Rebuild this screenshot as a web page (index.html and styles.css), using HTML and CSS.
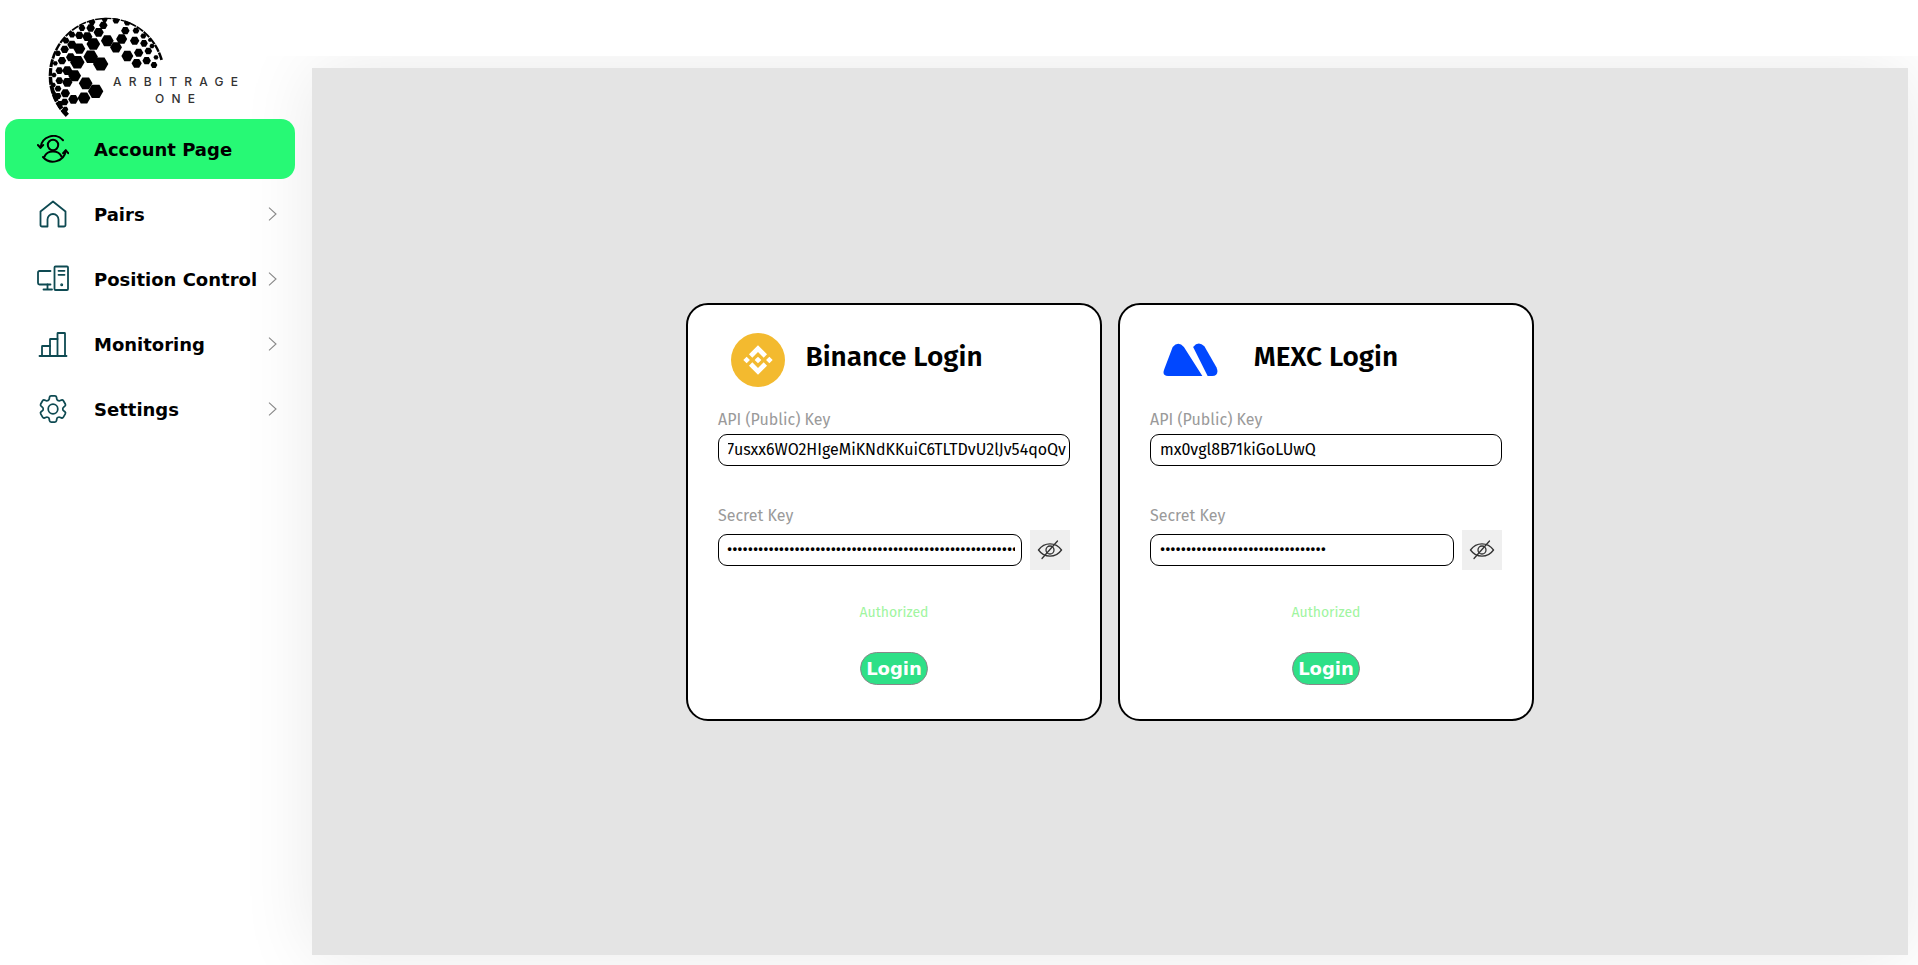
FILE: index.html
```html
<!DOCTYPE html>
<html lang="en">
<head>
<meta charset="utf-8">
<title>Arbitrage One</title>
<link rel="stylesheet" href="styles.css">
</head>
<body>
<aside class="sidebar">
  <div class="brand">
    <svg class="brand-mark" width="210" height="110" viewBox="0 0 210 110" role="img" aria-label="Arbitrage One">
      <defs>
        <polygon id="hex" points="-1.28,0 -0.64,-1.1 0.64,-1.1 1.28,0 0.64,1.1 -0.64,1.1"/>
        <clipPath id="dome"><circle cx="201" cy="198" r="175"/></clipPath>
      </defs>
      <g transform="scale(0.3333)" clip-path="url(#dome)">
        <path d="M82 316A172 172 0 1 1 368 150" fill="none" stroke="#000" stroke-width="14" stroke-dasharray="24 2.500"/>
        <use href="#hex" transform="translate(182 162) scale(18)"/>
        <use href="#hex" transform="translate(152 140) scale(17)"/>
        <use href="#hex" transform="translate(112 157) scale(17)"/>
        <use href="#hex" transform="translate(167 244) scale(18)"/>
        <use href="#hex" transform="translate(137 220) scale(16)"/>
        <use href="#hex" transform="translate(132 264) scale(15)"/>
        <use href="#hex" transform="translate(104 197) scale(15)"/>
        <use href="#hex" transform="translate(100 268) scale(12)"/>
        <use href="#hex" transform="translate(82 182) scale(12)"/>
        <use href="#hex" transform="translate(82 217) scale(12)"/>
        <use href="#hex" transform="translate(76 250) scale(11)"/>
        <use href="#hex" transform="translate(74 276) scale(9)"/>
        <use href="#hex" transform="translate(160 102) scale(16)"/>
        <use href="#hex" transform="translate(118 116) scale(14)"/>
        <use href="#hex" transform="translate(202 92) scale(15)"/>
        <use href="#hex" transform="translate(142 80) scale(12)"/>
        <use href="#hex" transform="translate(92 142) scale(11)"/>
        <use href="#hex" transform="translate(96 104) scale(11)"/>
        <use href="#hex" transform="translate(176 67) scale(12)"/>
        <use href="#hex" transform="translate(190 46) scale(10)"/>
        <use href="#hex" transform="translate(152 54) scale(10)"/>
        <use href="#hex" transform="translate(118 76) scale(10)"/>
        <use href="#hex" transform="translate(74 118) scale(10)"/>
        <use href="#hex" transform="translate(66 152) scale(10)"/>
        <use href="#hex" transform="translate(58 182) scale(9)"/>
        <use href="#hex" transform="translate(58 212) scale(9)"/>
        <use href="#hex" transform="translate(54 236) scale(8)"/>
        <use href="#hex" transform="translate(54 258) scale(8)"/>
        <use href="#hex" transform="translate(60 282) scale(8)"/>
        <use href="#hex" transform="translate(76 298) scale(7)"/>
        <use href="#hex" transform="translate(46 160) scale(6)"/>
        <use href="#hex" transform="translate(54 130) scale(7)"/>
        <use href="#hex" transform="translate(42 195) scale(6)"/>
        <use href="#hex" transform="translate(40 225) scale(6)"/>
        <use href="#hex" transform="translate(42 250) scale(5)"/>
        <use href="#hex" transform="translate(78 92) scale(8)"/>
        <use href="#hex" transform="translate(96 74) scale(8)"/>
        <use href="#hex" transform="translate(126 54) scale(8)"/>
        <use href="#hex" transform="translate(156 36) scale(8)"/>
        <use href="#hex" transform="translate(194 28) scale(7)"/>
        <use href="#hex" transform="translate(228 32) scale(8)"/>
        <use href="#hex" transform="translate(262 38) scale(8)"/>
        <use href="#hex" transform="translate(245 87) scale(13)"/>
        <use href="#hex" transform="translate(262 138) scale(14)"/>
        <use href="#hex" transform="translate(228 112) scale(14)"/>
        <use href="#hex" transform="translate(290 160) scale(12)"/>
        <use href="#hex" transform="translate(320 152) scale(10)"/>
        <use href="#hex" transform="translate(342 165) scale(8)"/>
        <use href="#hex" transform="translate(296 128) scale(11)"/>
        <use href="#hex" transform="translate(325 123) scale(9)"/>
        <use href="#hex" transform="translate(348 142) scale(6)"/>
        <use href="#hex" transform="translate(284 92) scale(11)"/>
        <use href="#hex" transform="translate(256 62) scale(10)"/>
        <use href="#hex" transform="translate(312 100) scale(9)"/>
        <use href="#hex" transform="translate(336 108) scale(6)"/>
        <use href="#hex" transform="translate(288 62) scale(8)"/>
        <use href="#hex" transform="translate(310 78) scale(7)"/>
        <use href="#hex" transform="translate(330 90) scale(5)"/>
      </g>
      <text class="brand-line" x="73" y="76">ARBITRAGE</text>
      <text class="brand-line" x="115" y="93">ONE</text>
    </svg>
  </div>
  <nav class="nav">
    <a class="nav-item nav-item-active">
      <svg class="nav-icon" width="32" height="28" viewBox="0 0 32 28" fill="none" stroke="#000" stroke-width="2" stroke-linecap="round" stroke-linejoin="round">
        <circle cx="16" cy="10" r="5.200"/>
        <path d="M7.500 21.500c1.500-3.500 4.500-5 8.500-5s7 1.500 8.500 5"/>
        <path d="M3.500 12.500A13 13 0 0 1 26 5.200"/>
        <path d="M28.800 15.500A13 13 0 0 1 6 22"/>
        <path d="M.9 10l2.600 2.800L6.200 10"/>
        <path d="M31.200 18.200l-2.400-2.900-2.700 2.900"/>
      </svg>
      <span class="nav-label">Account Page</span>
    </a>
    <a class="nav-item">
      <svg class="nav-icon" width="32" height="28" viewBox="0 0 32 28" fill="none" stroke="#0e4a52" stroke-width="1.800" stroke-linecap="round" stroke-linejoin="round">
        <path d="M3.500 11.500L16 1.500l12.500 10V25a1.500 1.500 0 0 1-1.500 1.500h-5.500V19.500a5.500 5.500 0 0 0-11 0v7H5a1.500 1.500 0 0 1-1.500-1.500z"/>
      </svg>
      <span class="nav-label">Pairs</span>
      <svg class="nav-chevron" width="9" height="14" viewBox="0 0 9 14" fill="none" stroke="#888" stroke-width="1.100"><path d="M1 .7L8 7l-7 6.300"/></svg>
    </a>
    <a class="nav-item">
      <svg class="nav-icon" width="32" height="28" viewBox="0 0 32 28" fill="none" stroke="#0e4a52" stroke-width="1.800" stroke-linecap="round" stroke-linejoin="round">
        <path d="M13.500 6H2.500a1.500 1.500 0 0 0-1.500 1.500V18a1.500 1.500 0 0 0 1.500 1.500h11"/>
        <path d="M10.500 19.500v4.500M6.500 24.500h8.500"/>
        <rect x="17.500" y="1.500" width="13.500" height="23.500" rx="1"/>
        <path d="M21.500 5.800h6M21.500 9.800h6"/>
        <circle cx="24.700" cy="19.800" r=".6" fill="#0e4a52"/>
      </svg>
      <span class="nav-label">Position Control</span>
      <svg class="nav-chevron" width="9" height="14" viewBox="0 0 9 14" fill="none" stroke="#888" stroke-width="1.100"><path d="M1 .7L8 7l-7 6.300"/></svg>
    </a>
    <a class="nav-item">
      <svg class="nav-icon" width="32" height="28" viewBox="0 0 32 28" fill="none" stroke="#0e4a52" stroke-width="1.800" stroke-linecap="round" stroke-linejoin="round">
        <path d="M2.500 26h27"/>
        <path d="M5 26V16.500a.5.5 0 0 1 .5-.5H13"/>
        <path d="M13 26V9.500a.5.5 0 0 1 .5-.5H20.500"/>
        <path d="M20.500 26V3.500a.5.5 0 0 1 .5-.5h6.500a.5.5 0 0 1 .5.5V26"/>
      </svg>
      <span class="nav-label">Monitoring</span>
      <svg class="nav-chevron" width="9" height="14" viewBox="0 0 9 14" fill="none" stroke="#888" stroke-width="1.100"><path d="M1 .7L8 7l-7 6.300"/></svg>
    </a>
    <a class="nav-item">
      <svg class="nav-icon" width="32" height="28" viewBox="1 2.400 22 19.250" fill="none" stroke="#0e4a52" stroke-width="1.200" stroke-linecap="round" stroke-linejoin="round">
        <path d="M9.594 3.940c.09-.542.56-.94 1.110-.94h2.593c.55 0 1.020.398 1.110.94l.213 1.281c.063.374.313.686.645.870.074.040.147.083.22.127.325.196.72.257 1.075.124l1.217-.456a1.125 1.125 0 0 1 1.370.49l1.296 2.247a1.125 1.125 0 0 1-.26 1.431l-1.003.827c-.293.241-.438.613-.43.992a7.723 7.723 0 0 1 0 .255c-.008.378.137.75.43.991l1.004.827c.424.35.534.955.26 1.430l-1.298 2.247a1.125 1.125 0 0 1-1.369.491l-1.217-.456c-.355-.133-.75-.072-1.076.124a6.470 6.470 0 0 1-.22.128c-.331.183-.581.495-.644.869l-.213 1.281c-.09.543-.56.94-1.110.94h-2.594c-.55 0-1.019-.398-1.110-.94l-.213-1.281c-.062-.374-.312-.686-.644-.87a6.520 6.520 0 0 1-.22-.127c-.325-.196-.72-.257-1.076-.124l-1.217.456a1.125 1.125 0 0 1-1.369-.49l-1.297-2.247a1.125 1.125 0 0 1 .26-1.431l1.004-.827c.292-.24.437-.613.43-.991a6.932 6.932 0 0 1 0-.255c.007-.38-.138-.751-.43-.992l-1.004-.827a1.125 1.125 0 0 1-.26-1.430l1.297-2.247a1.125 1.125 0 0 1 1.370-.491l1.216.456c.356.133.751.072 1.076-.124.072-.044.146-.086.22-.128.332-.183.582-.495.644-.869l.214-1.280z"/>
        <circle cx="12" cy="12" r="3.300"/>
      </svg>
      <span class="nav-label">Settings</span>
      <svg class="nav-chevron" width="9" height="14" viewBox="0 0 9 14" fill="none" stroke="#888" stroke-width="1.100"><path d="M1 .7L8 7l-7 6.300"/></svg>
    </a>
  </nav>
</aside>
<main class="main">
  <section class="panel">
    <form class="card">
      <header class="card-head">
        <svg class="card-logo" width="54" height="54" viewBox="0 0 32 32">
          <circle cx="16" cy="16" r="16" fill="#f3ba2f"/>
          <path fill="#fff" transform="translate(16 16) scale(.87) translate(-16 -16)" d="M12.116 14.404L16 10.520l3.886 3.886 2.260-2.260L16 6l-6.144 6.144 2.260 2.260zM6 16l2.260-2.260L10.520 16l-2.260 2.260L6 16zm6.116 1.596L16 21.480l3.886-3.886 2.260 2.259L16 26l-6.144-6.144-.003-.003 2.263-2.257zM21.480 16l2.260-2.260L26 16l-2.260 2.260L21.480 16zm-3.188-.002h.002V16L16 18.294l-2.291-2.290-.004-.004.004-.003.401-.402.195-.195L16 13.706l2.293 2.293z"/>
        </svg>
        <h2 class="card-title">Binance Login</h2>
      </header>
      <label class="field-label">API (Public) Key</label>
      <input class="field-input field-input-end" type="text" dir="rtl" value="U7usxx6WO2HIgeMiKNdKKuiC6TLTDvU2lJv54qoQv">
      <label class="field-label field-label-second">Secret Key</label>
      <div class="secret-row">
        <input class="field-input secret-input secret-input-long" type="password" value="aaaaaaaaaaaaaaaaaaaaaaaaaaaaaaaaaaaaaaaaaaaaaaaaaaaaaaaaaaaaaaaa">
        <button class="eye-button" type="button" aria-label="Show secret">
          <svg width="26" height="22" viewBox="0 0 26 22" fill="none" stroke="#333" stroke-width="1.300" stroke-linecap="round"><path d="M1.500 11C4.500 6.800 8.500 4.800 13 4.800S21.500 6.800 24.500 11c-3 4.200-7 6.200-11.500 6.200S4.500 15.200 1.500 11z"/><circle cx="13" cy="11" r="4"/><path d="M20.500 2L5 19.500"/></svg>
        </button>
      </div>
      <p class="status">Authorized</p>
      <button class="login-button" type="button">Login</button>
    </form>
    <form class="card">
      <header class="card-head">
        <svg class="card-logo" width="55" height="33" viewBox="0 0 164 100">
          <path fill="#0047ff" d="M28 12Q45-8 62 12L118 100H14Q-6 100 3 78Z"/>
          <path fill="#0047ff" d="M90 12Q106-8 124 10L161 74Q170 98 148 100H134Z"/>
        </svg>
        <h2 class="card-title">MEXC Login</h2>
      </header>
      <label class="field-label">API (Public) Key</label>
      <input class="field-input" type="text" value="mx0vgl8B71kiGoLUwQ">
      <label class="field-label field-label-second">Secret Key</label>
      <div class="secret-row">
        <input class="field-input secret-input" type="password" value="aaaaaaaaaaaaaaaaaaaaaaaaaaaaaaaa">
        <button class="eye-button" type="button" aria-label="Show secret">
          <svg width="26" height="22" viewBox="0 0 26 22" fill="none" stroke="#333" stroke-width="1.300" stroke-linecap="round"><path d="M1.500 11C4.500 6.800 8.500 4.800 13 4.800S21.500 6.800 24.500 11c-3 4.200-7 6.200-11.500 6.200S4.500 15.200 1.500 11z"/><circle cx="13" cy="11" r="4"/><path d="M20.500 2L5 19.500"/></svg>
        </button>
      </div>
      <p class="status">Authorized</p>
      <button class="login-button" type="button">Login</button>
    </form>
  </section>
</main>
</body>
</html>
```

FILE: styles.css
```css
* { box-sizing: border-box; }

html, body { height: 100%; }

body {
  margin: 0;
  display: flex;
  overflow: hidden;
  background: #fff;
  color: #000;
  font-family: "Fira Sans", "Noto Sans", sans-serif;
}

.sidebar {
  position: relative;
  z-index: 1;
  flex: 0 0 245px;
  width: 245px;
}

.brand { height: 119px; padding: 10px 0 0 40px; }
.brand-mark { display: block; overflow: visible; }
.brand-line {
  font-family: Inter, "Liberation Sans", sans-serif;
  font-size: 12px;
  font-weight: 500;
  letter-spacing: 7.200px;
  fill: #333;
}

.nav { display: flex; flex-direction: column; gap: 5px; padding-left: 5px; }

.nav-item {
  display: flex;
  align-items: center;
  width: 290px;
  height: 60px;
  padding: 0 18px 0 32px;
  border-radius: 14px;
}
.nav-item-active { background: #27f975; }
.nav-icon { flex: none; display: block; }
.nav-label {
  margin-left: 25px;
  font-family: "DejaVu Sans", sans-serif;
  font-size: 18px;
  font-weight: 700;
  white-space: nowrap;
}
.nav-chevron { flex: none; margin-left: auto; display: block; }

.main {
  flex: 1;
  min-width: 0;
  margin-top: 56px;
  padding: 12px 10px 10px 67px;
  overflow: hidden;
}

.panel {
  display: flex;
  align-items: center;
  justify-content: center;
  gap: 16px;
  height: 100%;
  background: #e4e4e4;
  box-shadow: 0 0 70px rgba(0, 0, 0, .09);
}

.card {
  display: flex;
  flex-direction: column;
  width: 416px;
  height: 418px;
  padding: 28px 30px 0;
  background: #fff;
  border: 2px solid #000;
  border-radius: 22px;
}

.card-head {
  display: grid;
  grid-template-columns: 1fr auto 1fr;
  align-items: center;
  height: 54px;
  margin-bottom: 23px;
}
.card-logo { display: block; margin-left: 13px; }
.card-title {
  margin: 0;
  padding-bottom: 6px;
  font-size: 28px;
  font-weight: 600;
  line-height: 48px;
  white-space: nowrap;
}

.field-label {
  display: block;
  height: 20px;
  margin-bottom: 4px;
  color: #9a9a9a;
  font-size: 16px;
  line-height: 20px;
}
.field-label-second { margin-top: 40px; }

.field-input {
  display: block;
  width: 100%;
  height: 32px;
  padding: 0 9px;
  background: #fff;
  border: 1.500px solid #000;
  border-radius: 9px;
  color: #000;
  font-family: inherit;
  font-size: 16px;
  outline: none;
}
.field-input-end { padding: 0 3px 0 9px; }

.secret-row { display: flex; align-items: center; gap: 8px; height: 40px; }
.secret-input { flex: 1; min-width: 0; }
.secret-input-long { padding: 0 6px 0 8px; }

.eye-button {
  display: flex;
  align-items: center;
  justify-content: center;
  flex: none;
  width: 40px;
  height: 40px;
  padding: 0;
  background: #efefef;
  border: 0;
}

.status {
  height: 20px;
  margin: 33px 0 29px;
  color: #a0f5a0;
  font-size: 14px;
  line-height: 20px;
  text-align: center;
}

.login-button {
  align-self: center;
  width: 68px;
  height: 33px;
  padding: 0;
  background: #2ee087;
  border: 1px solid #888;
  border-radius: 17px;
  color: #fff;
  font-family: "DejaVu Sans", sans-serif;
  font-size: 18px;
  font-weight: 700;
}
```
